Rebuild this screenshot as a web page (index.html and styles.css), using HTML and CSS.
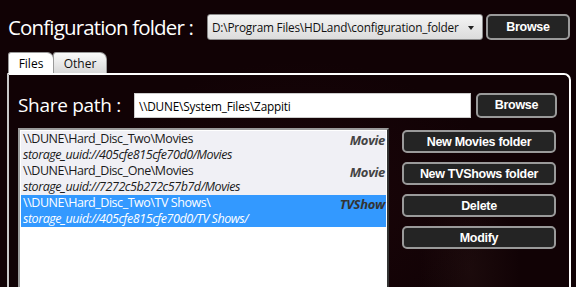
FILE: index.html
```html
<!DOCTYPE html>
<html lang="en">
<head>
  <meta charset="UTF-8" />
  <title>Configuration</title>
  <link rel="stylesheet" href="styles.css">
</head>
<body>

<div class="config-row">
  <span class="big-label">Configuration folder :</span>
  <div class="combo">
    <span>D:\Program Files\HDLand\configuration_folder</span>
    <span class="combo-arrow"></span>
  </div>
  <button class="btn browse-top">Browse</button>
</div>

<div class="tabs">
  <div class="tab active">Files</div>
  <div class="tab">Other</div>
</div>

<div class="panel">
  <div class="share-row">
    <span class="mid-label">Share path :</span>
    <div class="textbox">\\DUNE\System_Files\Zappiti</div>
    <button class="btn browse-share">Browse</button>
  </div>

  <div class="content-row">
    <div class="listbox">
      <div class="item">
        <div class="item-text">
          <div>\\DUNE\Hard_Disc_Two\Movies</div>
          <div class="uuid">storage_uuid://405cfe815cfe70d0/Movies</div>
        </div>
        <div class="kind">Movie</div>
      </div>
      <div class="item">
        <div class="item-text">
          <div>\\DUNE\Hard_Disc_One\Movies</div>
          <div class="uuid">storage_uuid://7272c5b272c57b7d/Movies</div>
        </div>
        <div class="kind">Movie</div>
      </div>
      <div class="item selected">
        <div class="item-text">
          <div>\\DUNE\Hard_Disc_Two\TV Shows\</div>
          <div class="uuid">storage_uuid://405cfe815cfe70d0/TV Shows/</div>
        </div>
        <div class="kind">TVShow</div>
      </div>
    </div>

    <div class="actions">
      <button class="btn">New Movies folder</button>
      <button class="btn">New TVShows folder</button>
      <button class="btn">Delete</button>
      <button class="btn">Modify</button>
    </div>
  </div>
</div>

</body>
</html>
```

FILE: styles.css
```css
* { box-sizing: border-box; margin: 0; padding: 0; }
body {
  width: 576px;
  height: 287px;
  overflow: hidden;
  background-color: #110205;
  background-image:
    radial-gradient(ellipse 50px 100px at 470px 270px, rgba(70, 45, 40, 0.2), transparent),
    radial-gradient(ellipse 200px 140px at 300px 200px, rgba(50, 15, 20, 0.3), transparent);
  font-family: "Open Sans", "Noto Sans", sans-serif;
  color: white;
}
.config-row {
  display: flex;
  align-items: center;
  padding: 14px 0 0 8px;
  height: 40px;
}
.big-label {
  font-size: 20.5px;
  letter-spacing: -0.85px;
  width: 199px;
  white-space: nowrap;
}
.combo {
  width: 276px;
  height: 26px;
  display: flex;
  align-items: center;
  justify-content: space-between;
  padding: 0 8px 0 4px;
  background: linear-gradient(#f4f4f4, #dcdcdc);
  border: 1px solid #8a8a8a;
  border-radius: 3px;
  color: #111;
  font-size: 11.8px;
  letter-spacing: -0.2px;
}
.combo-arrow {
  width: 0;
  height: 0;
  border-left: 3.5px solid transparent;
  border-right: 3.5px solid transparent;
  border-top: 4px solid #222;
  margin-top: 2px;
}
.btn {
  background: #242424;
  border: 2px solid #9a9a9a;
  border-radius: 5px;
  color: white;
  font-family: "Liberation Sans", Arial, sans-serif;
  font-weight: bold;
  font-size: 12.5px;
  letter-spacing: -0.3px;
  height: 26px;
  cursor: pointer;
}
.browse-top {
  width: 84px;
  margin-left: 3px;
}
.tabs {
  display: flex;
  padding-left: 8px;
  margin-top: 12px;
  height: 21px;
}
.tab {
  font-size: 12px;
  color: #111;
  padding: 2px 0 0 0;
  text-align: center;
  border: 1px solid #9a9a9a;
  border-bottom: none;
  border-radius: 3px 7px 0 0;
  background: linear-gradient(#fafafa, #d8d8d8);
}
.tab.active {
  width: 46px;
  background: white;
  color: #000;
}
.tab:not(.active) {
  width: 54px;
  margin-left: -1px;
}
.panel {
  margin-left: 7px;
  width: 564px;
  height: 220px;
  border: 2px solid white;
  border-bottom: none;
  border-left-color: #c8c8c8;
  border-top-right-radius: 7px;
  padding: 17px 0 0 9px;
}
.share-row {
  display: flex;
  align-items: center;
  height: 26px;
}
.mid-label {
  font-size: 19px;
  letter-spacing: -0.3px;
  width: 116px;
  white-space: nowrap;
}
.textbox {
  width: 337px;
  height: 25px;
  background: white;
  color: #000;
  font-size: 11.8px;
  letter-spacing: -0.2px;
  padding: 4px 4px;
  border: 1px solid #ccc;
}
.browse-share {
  width: 81px;
  height: 25px;
  margin-left: 5px;
}
.content-row {
  display: flex;
  gap: 13px;
  margin-top: 10px;
}
.listbox {
  width: 371px;
  height: 170px;
  background: white;
  border: 2px solid #9a9a9a;
  border-right-color: #333;
  border-bottom: none;
  padding: 1px 1px 0 1px;
}
.item {
  display: flex;
  height: 32px;
  background: #f0f0f5;
  color: #1a1a1a;
  font-size: 12.5px;
  letter-spacing: -0.45px;
  line-height: 16px;
  padding-left: 2px;
}
.item-text {
  flex: 1;
  white-space: nowrap;
}
.uuid {
  font-style: italic;
}
.kind {
  flex-shrink: 0;
  padding-right: 1px;
  white-space: nowrap;
  font-size: 13px;
  font-weight: bold;
  font-style: italic;
  letter-spacing: -0.3px;
  color: #444;
  padding-top: 1px;
}
.item.selected {
  background: #3399ff;
  color: white;
}
.item.selected .kind {
  color: #333;
}
.actions {
  display: flex;
  flex-direction: column;
  gap: 9px;
  padding-top: 2px;
}
.actions .btn {
  width: 154px;
  height: 23px;
}
```
